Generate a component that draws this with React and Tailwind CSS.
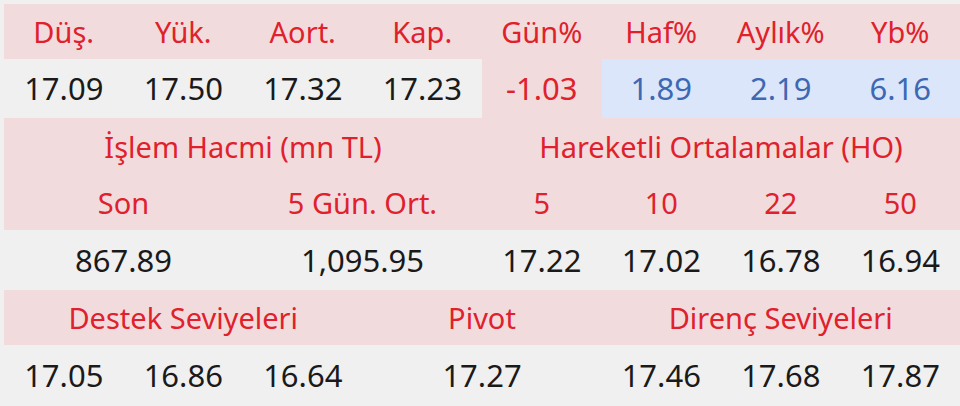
import React from "react";

const PINK = "bg-[#f2dbdd]";
const GRAY = "bg-[#f0f0f0]";
const BLUE = "bg-[#dbe6fa]";

function Cell({ children, span = "col-span-1", bg, color, h, size }) {
  return (
    <div className={`${span} ${bg} ${color} ${h} ${size} flex items-center justify-center whitespace-nowrap`}>
      {children}
    </div>
  );
}

export default function App() {
  const red = "text-[#e0212c]";
  const dark = "text-[#1a1a1a]";
  const blue = "text-[#3d68b3]";
  const hs = "text-[29px]";
  const vs = "text-[31px]";
  return (
    <div
      className="w-[960px] h-[406px] overflow-hidden bg-[#f0f0f0] pt-[4px] pl-[4px] leading-none"
      style={{ fontFamily: '"Noto Sans", "Open Sans", sans-serif' }}
    >
      <div className="grid grid-cols-8 w-[956px]">
        {["Düş.", "Yük.", "Aort.", "Kap.", "Gün%", "Haf%", "Aylık%", "Yb%"].map((t) => (
          <Cell key={t} bg={PINK} color={red} h="h-[55px]" size={hs}>{t}</Cell>
        ))}
        {["17.09", "17.50", "17.32", "17.23"].map((t) => (
          <Cell key={t} bg={GRAY} color={dark} h="h-[59px]" size={vs}>{t}</Cell>
        ))}
        <Cell bg={PINK} color={red} h="h-[59px]" size={vs}>-1.03</Cell>
        {["1.89", "2.19", "6.16"].map((t) => (
          <Cell key={t} bg={BLUE} color={blue} h="h-[59px]" size={vs}>{t}</Cell>
        ))}

        <Cell span="col-span-4" bg={PINK} color={red} h="h-[56px]" size={hs}>İşlem Hacmi (mn TL)</Cell>
        <Cell span="col-span-4" bg={PINK} color={red} h="h-[56px]" size={hs}>Hareketli Ortalamalar (HO)</Cell>

        <Cell span="col-span-2" bg={PINK} color={red} h="h-[56px]" size={hs}>Son</Cell>
        <Cell span="col-span-2" bg={PINK} color={red} h="h-[56px]" size={hs}>5 Gün. Ort.</Cell>
        {["5", "10", "22", "50"].map((t) => (
          <Cell key={t} bg={PINK} color={red} h="h-[56px]" size={hs}>{t}</Cell>
        ))}

        <Cell span="col-span-2" bg={GRAY} color={dark} h="h-[60px]" size={vs}>867.89</Cell>
        <Cell span="col-span-2" bg={GRAY} color={dark} h="h-[60px]" size={vs}>1,095.95</Cell>
        {["17.22", "17.02", "16.78", "16.94"].map((t) => (
          <Cell key={t} bg={GRAY} color={dark} h="h-[60px]" size={vs}>{t}</Cell>
        ))}

        <Cell span="col-span-3" bg={PINK} color={red} h="h-[55px]" size={hs}>Destek Seviyeleri</Cell>
        <Cell span="col-span-2" bg={PINK} color={red} h="h-[55px]" size={hs}>Pivot</Cell>
        <Cell span="col-span-3" bg={PINK} color={red} h="h-[55px]" size={hs}>Direnç Seviyeleri</Cell>

        {["17.05", "16.86", "16.64"].map((t) => (
          <Cell key={t} bg={GRAY} color={dark} h="h-[61px]" size={vs}>{t}</Cell>
        ))}
        <Cell span="col-span-2" bg={GRAY} color={dark} h="h-[61px]" size={vs}>17.27</Cell>
        {["17.46", "17.68", "17.87"].map((t) => (
          <Cell key={t} bg={GRAY} color={dark} h="h-[61px]" size={vs}>{t}</Cell>
        ))}
      </div>
    </div>
  );
}
